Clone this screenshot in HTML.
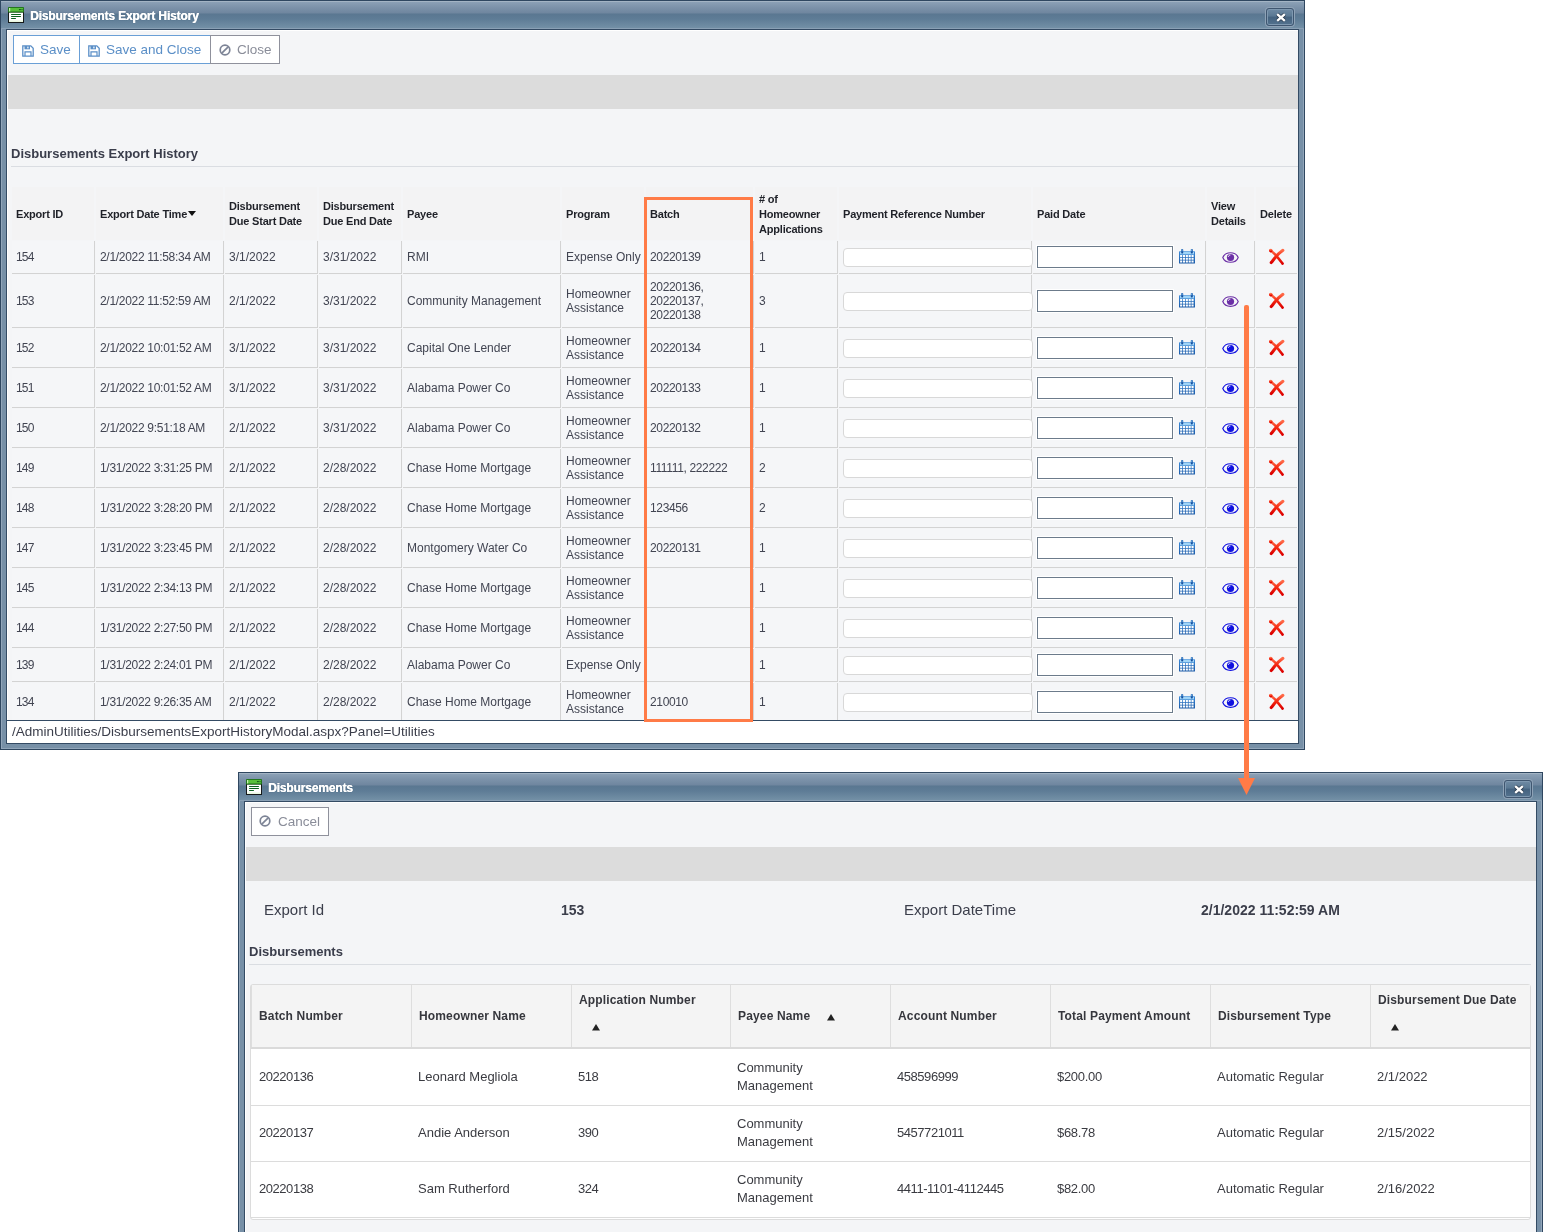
<!DOCTYPE html><html><head><meta charset="utf-8"><style>
*{margin:0;padding:0;box-sizing:border-box}
html,body{width:1543px;height:1232px;overflow:hidden;background:#fff;-webkit-font-smoothing:antialiased;font-family:"Liberation Sans",sans-serif;color:#3b3e4b}
.abs{position:absolute}
.frame{position:absolute;background:#7790a7;border:1px solid #2f4760}
.frame:before{content:"";position:absolute;left:0;top:0;right:0;bottom:0;border:1px solid #92a6ba;border-top-color:#a3b4c4}
.tbar{position:absolute;left:0;top:0;right:0;height:28px;background:linear-gradient(#8ea3b8 0px,#7d93aa 6px,#6f869f 12px,#5a7791 13px,#5e7c96 18px,#7390a6 27px)}
.tbar .hl{position:absolute;left:0;right:0;top:0;height:1px;background:#a3b4c4}
.tbar .hl2{position:absolute;left:0;right:0;bottom:0;height:1px;background:#8aa0b5}
.ttl{position:absolute;top:8px;font:bold 12px/14px "Liberation Sans",sans-serif;color:#fff;letter-spacing:-0.15px;text-shadow:0.4px 0 0 #fff,0 0 1px #3d5670}
.content{position:absolute;background:#f4f5f7;border:1px solid #344b64;overflow:hidden}
.content:before{content:"";position:absolute;left:0;top:0;right:0;bottom:0;border-left:1px solid #fff;border-top:1px solid #fff}
.xbtn{position:absolute;width:28px;height:18px;border:1px solid #3f5670;border-radius:3px;background:linear-gradient(#6f8aa4,#5a7893 45%,#44627f 50%,#53728e);box-shadow:0 0 0 1px #8ea2b6, inset 0 0 0 1px #7e98b0}
.band{position:absolute;background:#dcdcdc}
.btn{position:absolute;height:29px;border:1px solid #6a9fd6;background:#fff;font:13.5px/27px "Liberation Sans",sans-serif;color:#5b8fc7}
.btn.g{border-color:#8f919c;color:#8a8d99}
.sec{position:absolute;font:bold 13px/16px "Liberation Sans",sans-serif;color:#3a3d4b}
.rule{position:absolute;height:1px;background:#dadde2}
.c{position:absolute;border-right:1px solid #d3d3d3;border-bottom:1px solid #d3d3d3;background:#f5f6f8;display:flex;align-items:center;padding-left:4px;font-size:12px;line-height:14px;color:#424552;white-space:nowrap}
.h{position:absolute;background:#f3f3f4;display:flex;align-items:center;padding-left:4px;padding-top:1px;font-weight:bold;font-size:11px;line-height:15px;letter-spacing:-0.2px;color:#1f2128;white-space:nowrap}
.n{letter-spacing:-0.35px}
.inp{position:absolute;background:#fff;border:1px solid #d8d8d8;border-radius:4px}
.dinp{position:absolute;background:#fff;border:1px solid #6c7b8b;box-shadow:0 0 0 1px #fff}
.h2{position:absolute;background:#f4f4f4;border-right:1px solid #dedede;display:flex;align-items:center;padding-left:9px;font-weight:bold;font-size:12px;line-height:18px;color:#36373d;letter-spacing:0.15px;white-space:nowrap}
.c2{position:absolute;background:#fff;border-bottom:1px solid #dcdcdc;display:flex;align-items:center;padding-left:8px;font-size:13px;line-height:18px;color:#3a3b41;white-space:nowrap}
</style></head><body><div id="wrap" style="position:absolute;left:0;top:0;width:1543px;height:1232px;will-change:transform">
<div class="frame" style="left:0;top:0;width:1305px;height:750px">
<div class="tbar"><div class="hl"></div><div class="hl2"></div></div>
</div>
<svg class="abs" style="left:8px;top:7px" width="16" height="16" viewBox="0 0 16 16">
<rect x="0.5" y="5" width="15" height="10.5" fill="#fff" stroke="#16191a" stroke-width="1"/>
<rect x="1" y="13.5" width="14" height="1.5" fill="#eaf8e0"/>
<rect x="0" y="0" width="16" height="5.6" rx="0.8" fill="#23761f"/>
<rect x="1" y="1" width="14" height="3.4" fill="#58bf3c"/>
<rect x="1" y="1" width="1.2" height="3.4" fill="#c9f0b2"/>
<ellipse cx="11.9" cy="2.6" rx="1.1" ry="0.65" fill="#0f4f19"/><circle cx="14" cy="2.6" r="0.6" fill="#0f4f19"/>
<rect x="3" y="6.9" width="10" height="1.1" rx="0.5" fill="#0c6220"/>
<rect x="3" y="8.9" width="10" height="1.1" rx="0.5" fill="#0c6220"/>
<rect x="3" y="11" width="5" height="1.1" rx="0.5" fill="#0c6220"/>
</svg>
<div class="ttl" style="left:30px;top:9px">Disbursements Export History</div>
<div class="xbtn" style="left:1266px;top:8px"><svg class="abs" style="left:8px;top:3px" width="12" height="11" viewBox="0 0 12 11">
<path d="M2.2 2.2 L9.8 8.8 M9.8 2.2 L2.2 8.8" stroke="#2a3a4c" stroke-width="3.8" stroke-linecap="butt"/>
<path d="M2.2 2.2 L9.8 8.8 M9.8 2.2 L2.2 8.8" stroke="#fff" stroke-width="2.4" stroke-linecap="butt"/></svg></div>
<div class="content" style="left:6px;top:29px;width:1293px;height:715px">
</div>
<div class="btn" style="left:13px;top:35px;width:67px"></div>
<svg class="abs" style="left:22px;top:45px" width="12" height="12" viewBox="0 0 12 12">
<path d="M0.8 0.8 H8.8 L11.2 3.2 V11.2 H0.8 Z" fill="none" stroke="#5b8fc7" stroke-width="1.3"/>
<rect x="2.5" y="1" width="5.5" height="3.3" fill="#5b8fc7"/><rect x="5.3" y="1.6" width="1.2" height="1.8" fill="#fff"/>
<path d="M3 11 V6.8 H9 V11" fill="none" stroke="#5b8fc7" stroke-width="1.2"/></svg>
<div class="abs" style="left:40px;top:35px;font:13.5px/29px 'Liberation Sans',sans-serif;color:#5b8fc7">Save</div>
<div class="btn" style="left:79px;top:35px;width:132px"></div>
<svg class="abs" style="left:88px;top:45px" width="12" height="12" viewBox="0 0 12 12">
<path d="M0.8 0.8 H8.8 L11.2 3.2 V11.2 H0.8 Z" fill="none" stroke="#5b8fc7" stroke-width="1.3"/>
<rect x="2.5" y="1" width="5.5" height="3.3" fill="#5b8fc7"/><rect x="5.3" y="1.6" width="1.2" height="1.8" fill="#fff"/>
<path d="M3 11 V6.8 H9 V11" fill="none" stroke="#5b8fc7" stroke-width="1.2"/></svg>
<div class="abs" style="left:106px;top:35px;font:13.5px/29px 'Liberation Sans',sans-serif;color:#5b8fc7">Save and Close</div>
<div class="btn g" style="left:210px;top:35px;width:70px"></div>
<svg class="abs" style="left:219px;top:44px" width="12" height="12" viewBox="0 0 12 12">
<circle cx="6" cy="6" r="4.8" fill="none" stroke="#7d8496" stroke-width="1.7"/><path d="M2.8 9.2 L9.2 2.8" stroke="#7d8496" stroke-width="1.7"/></svg>
<div class="abs" style="left:237px;top:35px;font:13.5px/29px 'Liberation Sans',sans-serif;color:#8a8d99">Close</div>
<div class="band" style="left:8px;top:75px;width:1290px;height:34px"></div>
<div class="sec" style="left:11px;top:146px">Disbursements Export History</div>
<div class="rule" style="left:11px;top:166px;width:1287px"></div>
<div class="h" style="left:12px;top:187px;width:82px;height:53px;padding-left:4px"><span>Export ID</span></div>
<div class="h" style="left:96px;top:187px;width:127px;height:53px;padding-left:4px"><span>Export Date Time</span> <svg style="margin-left:1px;margin-top:-1px" width="8" height="5" viewBox="0 0 8 5"><path d="M0 0H8L4 5Z" fill="#111"/></svg></div>
<div class="h" style="left:225px;top:187px;width:92px;height:53px;padding-left:4px"><span>Disbursement<br>Due Start Date</span></div>
<div class="h" style="left:319px;top:187px;width:82px;height:53px;padding-left:4px"><span>Disbursement<br>Due End Date</span></div>
<div class="h" style="left:403px;top:187px;width:157px;height:53px;padding-left:4px"><span>Payee</span></div>
<div class="h" style="left:562px;top:187px;width:82px;height:53px;padding-left:4px"><span>Program</span></div>
<div class="h" style="left:646px;top:187px;width:107px;height:53px;padding-left:4px"><span>Batch</span></div>
<div class="h" style="left:755px;top:187px;width:82px;height:53px;padding-left:4px"><span># of<br>Homeowner<br>Applications</span></div>
<div class="h" style="left:839px;top:187px;width:192px;height:53px;padding-left:4px"><span>Payment Reference Number</span></div>
<div class="h" style="left:1033px;top:187px;width:172px;height:53px;padding-left:4px"><span>Paid Date</span></div>
<div class="h" style="left:1207px;top:187px;width:47px;height:53px;padding-left:4px"><span>View<br>Details</span></div>
<div class="h" style="left:1256px;top:187px;width:41px;height:53px;padding-left:4px"><span>Delete</span></div>
<div class="c" style="left:12px;top:241px;width:83px;height:33px;letter-spacing:-0.8px;padding-left:4px"><span>154</span></div>
<div class="c" style="left:96px;top:241px;width:128px;height:33px;letter-spacing:-0.3px;padding-left:4px"><span>2/1/2022 11:58:34 AM</span></div>
<div class="c" style="left:225px;top:241px;width:93px;height:33px;padding-left:4px"><span>3/1/2022</span></div>
<div class="c" style="left:319px;top:241px;width:83px;height:33px;padding-left:4px"><span>3/31/2022</span></div>
<div class="c" style="left:403px;top:241px;width:158px;height:33px;padding-left:4px"><span>RMI</span></div>
<div class="c" style="left:562px;top:241px;width:83px;height:33px;padding-left:4px"><span>Expense Only</span></div>
<div class="c" style="left:646px;top:241px;width:108px;height:33px;letter-spacing:-0.35px;padding-left:4px"><span>20220139</span></div>
<div class="c" style="left:755px;top:241px;width:83px;height:33px;padding-left:4px"><span>1</span></div>
<div class="c" style="left:839px;top:241px;width:193px;height:33px;padding-left:4px"><span></span></div>
<div class="c" style="left:1033px;top:241px;width:173px;height:33px;padding-left:4px"><span></span></div>
<div class="c" style="left:1207px;top:241px;width:48px;height:33px;padding-left:4px"><span></span></div>
<div class="c" style="left:1256px;top:241px;width:41px;height:33px;border-right:none;padding-left:4px"><span></span></div>
<div class="inp" style="left:843px;top:248px;width:190px;height:19px"></div>
<div class="dinp" style="left:1037px;top:246px;width:136px;height:22px"></div>
<svg class="abs" style="left:1179px;top:249px" width="16" height="15" viewBox="0 0 16 15"><defs><linearGradient id="cg" x1="0" y1="0" x2="0" y2="1"><stop offset="0" stop-color="#3d8ad8"/><stop offset="1" stop-color="#1c5ba8"/></linearGradient></defs><rect x="0" y="2.2" width="16" height="12.3" rx="0.6" fill="url(#cg)"/><rect x="1" y="2.8" width="14" height="2.6" fill="#9fd4f7"/><rect x="1.10" y="6.00" width="2.1" height="2.0" fill="#fff"/><rect x="1.10" y="8.75" width="2.1" height="2.0" fill="#fff"/><rect x="1.10" y="11.50" width="2.1" height="2.0" fill="#fff"/><rect x="3.95" y="6.00" width="2.1" height="2.0" fill="#fff"/><rect x="3.95" y="8.75" width="2.1" height="2.0" fill="#fff"/><rect x="3.95" y="11.50" width="2.1" height="2.0" fill="#fff"/><rect x="6.80" y="6.00" width="2.1" height="2.0" fill="#fff"/><rect x="6.80" y="8.75" width="2.1" height="2.0" fill="#fff"/><rect x="6.80" y="11.50" width="2.1" height="2.0" fill="#fff"/><rect x="9.65" y="6.00" width="2.1" height="2.0" fill="#fff"/><rect x="9.65" y="8.75" width="2.1" height="2.0" fill="#fff"/><rect x="9.65" y="11.50" width="2.1" height="2.0" fill="#fff"/><rect x="12.50" y="6.00" width="2.1" height="2.0" fill="#fff"/><rect x="12.50" y="8.75" width="2.1" height="2.0" fill="#fff"/><rect x="12.50" y="11.50" width="2.1" height="2.0" fill="#fff"/><rect x="2.2" y="0" width="2" height="4.6" rx="0.8" fill="#1650a0"/><rect x="2.6" y="0.3" width="1" height="2" fill="#6fb8ef"/><rect x="11.8" y="0" width="2" height="4.6" rx="0.8" fill="#1650a0"/><rect x="12.2" y="0.3" width="1" height="2" fill="#6fb8ef"/></svg>
<svg class="abs" style="left:1222px;top:252px" width="17" height="11" viewBox="0 0 17 11">
<path d="M0.8 5.5 C3.2 -0.9 13.8 -0.9 16.2 5.5 C13.8 11.9 3.2 11.9 0.8 5.5 Z" fill="none" stroke="#6b2fa6" stroke-width="1.15"/>
<circle cx="8.5" cy="5.5" r="3.6" fill="#6b2fa6"/><path d="M6.3 4.9 C6.5 3.7 7.3 3.0 8.4 3.0" fill="none" stroke="#fff" stroke-width="0.9"/></svg>
<svg class="abs" style="left:1268px;top:248px" width="17" height="17" viewBox="0 0 17 17">
<defs><linearGradient id="rg1268248" x1="0" y1="0" x2="0" y2="1"><stop offset="0" stop-color="#ff6a48"/><stop offset="0.5" stop-color="#f42a12"/><stop offset="1" stop-color="#dc0000"/></linearGradient></defs>
<g fill="none" stroke="url(#rg1268248)" stroke-linecap="round">
<path d="M2.6 2.4 C5 4.3 7.5 6.6 9.2 8.8 C11.3 11.2 12.8 13.3 14.6 15.6" stroke-width="2.6"/>
<path d="M14.9 2.3 C11.5 4.8 9.2 6.8 7.5 9.2 C5.6 11.5 4.4 13.2 3.2 14.6" stroke-width="3.0"/>
<circle cx="2.8" cy="2.6" r="1.1" stroke-width="1.4"/>
</g></svg>
<div class="c" style="left:12px;top:275px;width:83px;height:53px;letter-spacing:-0.8px;padding-left:4px"><span>153</span></div>
<div class="c" style="left:96px;top:275px;width:128px;height:53px;letter-spacing:-0.3px;padding-left:4px"><span>2/1/2022 11:52:59 AM</span></div>
<div class="c" style="left:225px;top:275px;width:93px;height:53px;padding-left:4px"><span>2/1/2022</span></div>
<div class="c" style="left:319px;top:275px;width:83px;height:53px;padding-left:4px"><span>3/31/2022</span></div>
<div class="c" style="left:403px;top:275px;width:158px;height:53px;padding-left:4px"><span>Community Management</span></div>
<div class="c" style="left:562px;top:275px;width:83px;height:53px;padding-left:4px"><span>Homeowner<br>Assistance</span></div>
<div class="c" style="left:646px;top:275px;width:108px;height:53px;letter-spacing:-0.35px;padding-left:4px"><span>20220136,<br>20220137,<br>20220138</span></div>
<div class="c" style="left:755px;top:275px;width:83px;height:53px;padding-left:4px"><span>3</span></div>
<div class="c" style="left:839px;top:275px;width:193px;height:53px;padding-left:4px"><span></span></div>
<div class="c" style="left:1033px;top:275px;width:173px;height:53px;padding-left:4px"><span></span></div>
<div class="c" style="left:1207px;top:275px;width:48px;height:53px;padding-left:4px"><span></span></div>
<div class="c" style="left:1256px;top:275px;width:41px;height:53px;border-right:none;padding-left:4px"><span></span></div>
<div class="inp" style="left:843px;top:292px;width:190px;height:19px"></div>
<div class="dinp" style="left:1037px;top:290px;width:136px;height:22px"></div>
<svg class="abs" style="left:1179px;top:293px" width="16" height="15" viewBox="0 0 16 15"><defs><linearGradient id="cg" x1="0" y1="0" x2="0" y2="1"><stop offset="0" stop-color="#3d8ad8"/><stop offset="1" stop-color="#1c5ba8"/></linearGradient></defs><rect x="0" y="2.2" width="16" height="12.3" rx="0.6" fill="url(#cg)"/><rect x="1" y="2.8" width="14" height="2.6" fill="#9fd4f7"/><rect x="1.10" y="6.00" width="2.1" height="2.0" fill="#fff"/><rect x="1.10" y="8.75" width="2.1" height="2.0" fill="#fff"/><rect x="1.10" y="11.50" width="2.1" height="2.0" fill="#fff"/><rect x="3.95" y="6.00" width="2.1" height="2.0" fill="#fff"/><rect x="3.95" y="8.75" width="2.1" height="2.0" fill="#fff"/><rect x="3.95" y="11.50" width="2.1" height="2.0" fill="#fff"/><rect x="6.80" y="6.00" width="2.1" height="2.0" fill="#fff"/><rect x="6.80" y="8.75" width="2.1" height="2.0" fill="#fff"/><rect x="6.80" y="11.50" width="2.1" height="2.0" fill="#fff"/><rect x="9.65" y="6.00" width="2.1" height="2.0" fill="#fff"/><rect x="9.65" y="8.75" width="2.1" height="2.0" fill="#fff"/><rect x="9.65" y="11.50" width="2.1" height="2.0" fill="#fff"/><rect x="12.50" y="6.00" width="2.1" height="2.0" fill="#fff"/><rect x="12.50" y="8.75" width="2.1" height="2.0" fill="#fff"/><rect x="12.50" y="11.50" width="2.1" height="2.0" fill="#fff"/><rect x="2.2" y="0" width="2" height="4.6" rx="0.8" fill="#1650a0"/><rect x="2.6" y="0.3" width="1" height="2" fill="#6fb8ef"/><rect x="11.8" y="0" width="2" height="4.6" rx="0.8" fill="#1650a0"/><rect x="12.2" y="0.3" width="1" height="2" fill="#6fb8ef"/></svg>
<svg class="abs" style="left:1222px;top:296px" width="17" height="11" viewBox="0 0 17 11">
<path d="M0.8 5.5 C3.2 -0.9 13.8 -0.9 16.2 5.5 C13.8 11.9 3.2 11.9 0.8 5.5 Z" fill="none" stroke="#6b2fa6" stroke-width="1.15"/>
<circle cx="8.5" cy="5.5" r="3.6" fill="#6b2fa6"/><path d="M6.3 4.9 C6.5 3.7 7.3 3.0 8.4 3.0" fill="none" stroke="#fff" stroke-width="0.9"/></svg>
<svg class="abs" style="left:1268px;top:292px" width="17" height="17" viewBox="0 0 17 17">
<defs><linearGradient id="rg1268292" x1="0" y1="0" x2="0" y2="1"><stop offset="0" stop-color="#ff6a48"/><stop offset="0.5" stop-color="#f42a12"/><stop offset="1" stop-color="#dc0000"/></linearGradient></defs>
<g fill="none" stroke="url(#rg1268292)" stroke-linecap="round">
<path d="M2.6 2.4 C5 4.3 7.5 6.6 9.2 8.8 C11.3 11.2 12.8 13.3 14.6 15.6" stroke-width="2.6"/>
<path d="M14.9 2.3 C11.5 4.8 9.2 6.8 7.5 9.2 C5.6 11.5 4.4 13.2 3.2 14.6" stroke-width="3.0"/>
<circle cx="2.8" cy="2.6" r="1.1" stroke-width="1.4"/>
</g></svg>
<div class="c" style="left:12px;top:329px;width:83px;height:39px;letter-spacing:-0.8px;padding-left:4px"><span>152</span></div>
<div class="c" style="left:96px;top:329px;width:128px;height:39px;letter-spacing:-0.3px;padding-left:4px"><span>2/1/2022 10:01:52 AM</span></div>
<div class="c" style="left:225px;top:329px;width:93px;height:39px;padding-left:4px"><span>3/1/2022</span></div>
<div class="c" style="left:319px;top:329px;width:83px;height:39px;padding-left:4px"><span>3/31/2022</span></div>
<div class="c" style="left:403px;top:329px;width:158px;height:39px;padding-left:4px"><span>Capital One Lender</span></div>
<div class="c" style="left:562px;top:329px;width:83px;height:39px;padding-left:4px"><span>Homeowner<br>Assistance</span></div>
<div class="c" style="left:646px;top:329px;width:108px;height:39px;letter-spacing:-0.35px;padding-left:4px"><span>20220134</span></div>
<div class="c" style="left:755px;top:329px;width:83px;height:39px;padding-left:4px"><span>1</span></div>
<div class="c" style="left:839px;top:329px;width:193px;height:39px;padding-left:4px"><span></span></div>
<div class="c" style="left:1033px;top:329px;width:173px;height:39px;padding-left:4px"><span></span></div>
<div class="c" style="left:1207px;top:329px;width:48px;height:39px;padding-left:4px"><span></span></div>
<div class="c" style="left:1256px;top:329px;width:41px;height:39px;border-right:none;padding-left:4px"><span></span></div>
<div class="inp" style="left:843px;top:339px;width:190px;height:19px"></div>
<div class="dinp" style="left:1037px;top:337px;width:136px;height:22px"></div>
<svg class="abs" style="left:1179px;top:340px" width="16" height="15" viewBox="0 0 16 15"><defs><linearGradient id="cg" x1="0" y1="0" x2="0" y2="1"><stop offset="0" stop-color="#3d8ad8"/><stop offset="1" stop-color="#1c5ba8"/></linearGradient></defs><rect x="0" y="2.2" width="16" height="12.3" rx="0.6" fill="url(#cg)"/><rect x="1" y="2.8" width="14" height="2.6" fill="#9fd4f7"/><rect x="1.10" y="6.00" width="2.1" height="2.0" fill="#fff"/><rect x="1.10" y="8.75" width="2.1" height="2.0" fill="#fff"/><rect x="1.10" y="11.50" width="2.1" height="2.0" fill="#fff"/><rect x="3.95" y="6.00" width="2.1" height="2.0" fill="#fff"/><rect x="3.95" y="8.75" width="2.1" height="2.0" fill="#fff"/><rect x="3.95" y="11.50" width="2.1" height="2.0" fill="#fff"/><rect x="6.80" y="6.00" width="2.1" height="2.0" fill="#fff"/><rect x="6.80" y="8.75" width="2.1" height="2.0" fill="#fff"/><rect x="6.80" y="11.50" width="2.1" height="2.0" fill="#fff"/><rect x="9.65" y="6.00" width="2.1" height="2.0" fill="#fff"/><rect x="9.65" y="8.75" width="2.1" height="2.0" fill="#fff"/><rect x="9.65" y="11.50" width="2.1" height="2.0" fill="#fff"/><rect x="12.50" y="6.00" width="2.1" height="2.0" fill="#fff"/><rect x="12.50" y="8.75" width="2.1" height="2.0" fill="#fff"/><rect x="12.50" y="11.50" width="2.1" height="2.0" fill="#fff"/><rect x="2.2" y="0" width="2" height="4.6" rx="0.8" fill="#1650a0"/><rect x="2.6" y="0.3" width="1" height="2" fill="#6fb8ef"/><rect x="11.8" y="0" width="2" height="4.6" rx="0.8" fill="#1650a0"/><rect x="12.2" y="0.3" width="1" height="2" fill="#6fb8ef"/></svg>
<svg class="abs" style="left:1222px;top:343px" width="17" height="11" viewBox="0 0 17 11">
<path d="M0.8 5.5 C3.2 -0.9 13.8 -0.9 16.2 5.5 C13.8 11.9 3.2 11.9 0.8 5.5 Z" fill="none" stroke="#1010e0" stroke-width="1.15"/>
<circle cx="8.5" cy="5.5" r="3.6" fill="#1010e0"/><path d="M6.3 4.9 C6.5 3.7 7.3 3.0 8.4 3.0" fill="none" stroke="#fff" stroke-width="0.9"/></svg>
<svg class="abs" style="left:1268px;top:339px" width="17" height="17" viewBox="0 0 17 17">
<defs><linearGradient id="rg1268339" x1="0" y1="0" x2="0" y2="1"><stop offset="0" stop-color="#ff6a48"/><stop offset="0.5" stop-color="#f42a12"/><stop offset="1" stop-color="#dc0000"/></linearGradient></defs>
<g fill="none" stroke="url(#rg1268339)" stroke-linecap="round">
<path d="M2.6 2.4 C5 4.3 7.5 6.6 9.2 8.8 C11.3 11.2 12.8 13.3 14.6 15.6" stroke-width="2.6"/>
<path d="M14.9 2.3 C11.5 4.8 9.2 6.8 7.5 9.2 C5.6 11.5 4.4 13.2 3.2 14.6" stroke-width="3.0"/>
<circle cx="2.8" cy="2.6" r="1.1" stroke-width="1.4"/>
</g></svg>
<div class="c" style="left:12px;top:369px;width:83px;height:39px;letter-spacing:-0.8px;padding-left:4px"><span>151</span></div>
<div class="c" style="left:96px;top:369px;width:128px;height:39px;letter-spacing:-0.3px;padding-left:4px"><span>2/1/2022 10:01:52 AM</span></div>
<div class="c" style="left:225px;top:369px;width:93px;height:39px;padding-left:4px"><span>3/1/2022</span></div>
<div class="c" style="left:319px;top:369px;width:83px;height:39px;padding-left:4px"><span>3/31/2022</span></div>
<div class="c" style="left:403px;top:369px;width:158px;height:39px;padding-left:4px"><span>Alabama Power Co</span></div>
<div class="c" style="left:562px;top:369px;width:83px;height:39px;padding-left:4px"><span>Homeowner<br>Assistance</span></div>
<div class="c" style="left:646px;top:369px;width:108px;height:39px;letter-spacing:-0.35px;padding-left:4px"><span>20220133</span></div>
<div class="c" style="left:755px;top:369px;width:83px;height:39px;padding-left:4px"><span>1</span></div>
<div class="c" style="left:839px;top:369px;width:193px;height:39px;padding-left:4px"><span></span></div>
<div class="c" style="left:1033px;top:369px;width:173px;height:39px;padding-left:4px"><span></span></div>
<div class="c" style="left:1207px;top:369px;width:48px;height:39px;padding-left:4px"><span></span></div>
<div class="c" style="left:1256px;top:369px;width:41px;height:39px;border-right:none;padding-left:4px"><span></span></div>
<div class="inp" style="left:843px;top:379px;width:190px;height:19px"></div>
<div class="dinp" style="left:1037px;top:377px;width:136px;height:22px"></div>
<svg class="abs" style="left:1179px;top:380px" width="16" height="15" viewBox="0 0 16 15"><defs><linearGradient id="cg" x1="0" y1="0" x2="0" y2="1"><stop offset="0" stop-color="#3d8ad8"/><stop offset="1" stop-color="#1c5ba8"/></linearGradient></defs><rect x="0" y="2.2" width="16" height="12.3" rx="0.6" fill="url(#cg)"/><rect x="1" y="2.8" width="14" height="2.6" fill="#9fd4f7"/><rect x="1.10" y="6.00" width="2.1" height="2.0" fill="#fff"/><rect x="1.10" y="8.75" width="2.1" height="2.0" fill="#fff"/><rect x="1.10" y="11.50" width="2.1" height="2.0" fill="#fff"/><rect x="3.95" y="6.00" width="2.1" height="2.0" fill="#fff"/><rect x="3.95" y="8.75" width="2.1" height="2.0" fill="#fff"/><rect x="3.95" y="11.50" width="2.1" height="2.0" fill="#fff"/><rect x="6.80" y="6.00" width="2.1" height="2.0" fill="#fff"/><rect x="6.80" y="8.75" width="2.1" height="2.0" fill="#fff"/><rect x="6.80" y="11.50" width="2.1" height="2.0" fill="#fff"/><rect x="9.65" y="6.00" width="2.1" height="2.0" fill="#fff"/><rect x="9.65" y="8.75" width="2.1" height="2.0" fill="#fff"/><rect x="9.65" y="11.50" width="2.1" height="2.0" fill="#fff"/><rect x="12.50" y="6.00" width="2.1" height="2.0" fill="#fff"/><rect x="12.50" y="8.75" width="2.1" height="2.0" fill="#fff"/><rect x="12.50" y="11.50" width="2.1" height="2.0" fill="#fff"/><rect x="2.2" y="0" width="2" height="4.6" rx="0.8" fill="#1650a0"/><rect x="2.6" y="0.3" width="1" height="2" fill="#6fb8ef"/><rect x="11.8" y="0" width="2" height="4.6" rx="0.8" fill="#1650a0"/><rect x="12.2" y="0.3" width="1" height="2" fill="#6fb8ef"/></svg>
<svg class="abs" style="left:1222px;top:383px" width="17" height="11" viewBox="0 0 17 11">
<path d="M0.8 5.5 C3.2 -0.9 13.8 -0.9 16.2 5.5 C13.8 11.9 3.2 11.9 0.8 5.5 Z" fill="none" stroke="#1010e0" stroke-width="1.15"/>
<circle cx="8.5" cy="5.5" r="3.6" fill="#1010e0"/><path d="M6.3 4.9 C6.5 3.7 7.3 3.0 8.4 3.0" fill="none" stroke="#fff" stroke-width="0.9"/></svg>
<svg class="abs" style="left:1268px;top:379px" width="17" height="17" viewBox="0 0 17 17">
<defs><linearGradient id="rg1268379" x1="0" y1="0" x2="0" y2="1"><stop offset="0" stop-color="#ff6a48"/><stop offset="0.5" stop-color="#f42a12"/><stop offset="1" stop-color="#dc0000"/></linearGradient></defs>
<g fill="none" stroke="url(#rg1268379)" stroke-linecap="round">
<path d="M2.6 2.4 C5 4.3 7.5 6.6 9.2 8.8 C11.3 11.2 12.8 13.3 14.6 15.6" stroke-width="2.6"/>
<path d="M14.9 2.3 C11.5 4.8 9.2 6.8 7.5 9.2 C5.6 11.5 4.4 13.2 3.2 14.6" stroke-width="3.0"/>
<circle cx="2.8" cy="2.6" r="1.1" stroke-width="1.4"/>
</g></svg>
<div class="c" style="left:12px;top:409px;width:83px;height:39px;letter-spacing:-0.8px;padding-left:4px"><span>150</span></div>
<div class="c" style="left:96px;top:409px;width:128px;height:39px;letter-spacing:-0.3px;padding-left:4px"><span>2/1/2022 9:51:18 AM</span></div>
<div class="c" style="left:225px;top:409px;width:93px;height:39px;padding-left:4px"><span>2/1/2022</span></div>
<div class="c" style="left:319px;top:409px;width:83px;height:39px;padding-left:4px"><span>3/31/2022</span></div>
<div class="c" style="left:403px;top:409px;width:158px;height:39px;padding-left:4px"><span>Alabama Power Co</span></div>
<div class="c" style="left:562px;top:409px;width:83px;height:39px;padding-left:4px"><span>Homeowner<br>Assistance</span></div>
<div class="c" style="left:646px;top:409px;width:108px;height:39px;letter-spacing:-0.35px;padding-left:4px"><span>20220132</span></div>
<div class="c" style="left:755px;top:409px;width:83px;height:39px;padding-left:4px"><span>1</span></div>
<div class="c" style="left:839px;top:409px;width:193px;height:39px;padding-left:4px"><span></span></div>
<div class="c" style="left:1033px;top:409px;width:173px;height:39px;padding-left:4px"><span></span></div>
<div class="c" style="left:1207px;top:409px;width:48px;height:39px;padding-left:4px"><span></span></div>
<div class="c" style="left:1256px;top:409px;width:41px;height:39px;border-right:none;padding-left:4px"><span></span></div>
<div class="inp" style="left:843px;top:419px;width:190px;height:19px"></div>
<div class="dinp" style="left:1037px;top:417px;width:136px;height:22px"></div>
<svg class="abs" style="left:1179px;top:420px" width="16" height="15" viewBox="0 0 16 15"><defs><linearGradient id="cg" x1="0" y1="0" x2="0" y2="1"><stop offset="0" stop-color="#3d8ad8"/><stop offset="1" stop-color="#1c5ba8"/></linearGradient></defs><rect x="0" y="2.2" width="16" height="12.3" rx="0.6" fill="url(#cg)"/><rect x="1" y="2.8" width="14" height="2.6" fill="#9fd4f7"/><rect x="1.10" y="6.00" width="2.1" height="2.0" fill="#fff"/><rect x="1.10" y="8.75" width="2.1" height="2.0" fill="#fff"/><rect x="1.10" y="11.50" width="2.1" height="2.0" fill="#fff"/><rect x="3.95" y="6.00" width="2.1" height="2.0" fill="#fff"/><rect x="3.95" y="8.75" width="2.1" height="2.0" fill="#fff"/><rect x="3.95" y="11.50" width="2.1" height="2.0" fill="#fff"/><rect x="6.80" y="6.00" width="2.1" height="2.0" fill="#fff"/><rect x="6.80" y="8.75" width="2.1" height="2.0" fill="#fff"/><rect x="6.80" y="11.50" width="2.1" height="2.0" fill="#fff"/><rect x="9.65" y="6.00" width="2.1" height="2.0" fill="#fff"/><rect x="9.65" y="8.75" width="2.1" height="2.0" fill="#fff"/><rect x="9.65" y="11.50" width="2.1" height="2.0" fill="#fff"/><rect x="12.50" y="6.00" width="2.1" height="2.0" fill="#fff"/><rect x="12.50" y="8.75" width="2.1" height="2.0" fill="#fff"/><rect x="12.50" y="11.50" width="2.1" height="2.0" fill="#fff"/><rect x="2.2" y="0" width="2" height="4.6" rx="0.8" fill="#1650a0"/><rect x="2.6" y="0.3" width="1" height="2" fill="#6fb8ef"/><rect x="11.8" y="0" width="2" height="4.6" rx="0.8" fill="#1650a0"/><rect x="12.2" y="0.3" width="1" height="2" fill="#6fb8ef"/></svg>
<svg class="abs" style="left:1222px;top:423px" width="17" height="11" viewBox="0 0 17 11">
<path d="M0.8 5.5 C3.2 -0.9 13.8 -0.9 16.2 5.5 C13.8 11.9 3.2 11.9 0.8 5.5 Z" fill="none" stroke="#1010e0" stroke-width="1.15"/>
<circle cx="8.5" cy="5.5" r="3.6" fill="#1010e0"/><path d="M6.3 4.9 C6.5 3.7 7.3 3.0 8.4 3.0" fill="none" stroke="#fff" stroke-width="0.9"/></svg>
<svg class="abs" style="left:1268px;top:419px" width="17" height="17" viewBox="0 0 17 17">
<defs><linearGradient id="rg1268419" x1="0" y1="0" x2="0" y2="1"><stop offset="0" stop-color="#ff6a48"/><stop offset="0.5" stop-color="#f42a12"/><stop offset="1" stop-color="#dc0000"/></linearGradient></defs>
<g fill="none" stroke="url(#rg1268419)" stroke-linecap="round">
<path d="M2.6 2.4 C5 4.3 7.5 6.6 9.2 8.8 C11.3 11.2 12.8 13.3 14.6 15.6" stroke-width="2.6"/>
<path d="M14.9 2.3 C11.5 4.8 9.2 6.8 7.5 9.2 C5.6 11.5 4.4 13.2 3.2 14.6" stroke-width="3.0"/>
<circle cx="2.8" cy="2.6" r="1.1" stroke-width="1.4"/>
</g></svg>
<div class="c" style="left:12px;top:449px;width:83px;height:39px;letter-spacing:-0.8px;padding-left:4px"><span>149</span></div>
<div class="c" style="left:96px;top:449px;width:128px;height:39px;letter-spacing:-0.3px;padding-left:4px"><span>1/31/2022 3:31:25 PM</span></div>
<div class="c" style="left:225px;top:449px;width:93px;height:39px;padding-left:4px"><span>2/1/2022</span></div>
<div class="c" style="left:319px;top:449px;width:83px;height:39px;padding-left:4px"><span>2/28/2022</span></div>
<div class="c" style="left:403px;top:449px;width:158px;height:39px;padding-left:4px"><span>Chase Home Mortgage</span></div>
<div class="c" style="left:562px;top:449px;width:83px;height:39px;padding-left:4px"><span>Homeowner<br>Assistance</span></div>
<div class="c" style="left:646px;top:449px;width:108px;height:39px;letter-spacing:-0.35px;padding-left:4px"><span>111111, 222222</span></div>
<div class="c" style="left:755px;top:449px;width:83px;height:39px;padding-left:4px"><span>2</span></div>
<div class="c" style="left:839px;top:449px;width:193px;height:39px;padding-left:4px"><span></span></div>
<div class="c" style="left:1033px;top:449px;width:173px;height:39px;padding-left:4px"><span></span></div>
<div class="c" style="left:1207px;top:449px;width:48px;height:39px;padding-left:4px"><span></span></div>
<div class="c" style="left:1256px;top:449px;width:41px;height:39px;border-right:none;padding-left:4px"><span></span></div>
<div class="inp" style="left:843px;top:459px;width:190px;height:19px"></div>
<div class="dinp" style="left:1037px;top:457px;width:136px;height:22px"></div>
<svg class="abs" style="left:1179px;top:460px" width="16" height="15" viewBox="0 0 16 15"><defs><linearGradient id="cg" x1="0" y1="0" x2="0" y2="1"><stop offset="0" stop-color="#3d8ad8"/><stop offset="1" stop-color="#1c5ba8"/></linearGradient></defs><rect x="0" y="2.2" width="16" height="12.3" rx="0.6" fill="url(#cg)"/><rect x="1" y="2.8" width="14" height="2.6" fill="#9fd4f7"/><rect x="1.10" y="6.00" width="2.1" height="2.0" fill="#fff"/><rect x="1.10" y="8.75" width="2.1" height="2.0" fill="#fff"/><rect x="1.10" y="11.50" width="2.1" height="2.0" fill="#fff"/><rect x="3.95" y="6.00" width="2.1" height="2.0" fill="#fff"/><rect x="3.95" y="8.75" width="2.1" height="2.0" fill="#fff"/><rect x="3.95" y="11.50" width="2.1" height="2.0" fill="#fff"/><rect x="6.80" y="6.00" width="2.1" height="2.0" fill="#fff"/><rect x="6.80" y="8.75" width="2.1" height="2.0" fill="#fff"/><rect x="6.80" y="11.50" width="2.1" height="2.0" fill="#fff"/><rect x="9.65" y="6.00" width="2.1" height="2.0" fill="#fff"/><rect x="9.65" y="8.75" width="2.1" height="2.0" fill="#fff"/><rect x="9.65" y="11.50" width="2.1" height="2.0" fill="#fff"/><rect x="12.50" y="6.00" width="2.1" height="2.0" fill="#fff"/><rect x="12.50" y="8.75" width="2.1" height="2.0" fill="#fff"/><rect x="12.50" y="11.50" width="2.1" height="2.0" fill="#fff"/><rect x="2.2" y="0" width="2" height="4.6" rx="0.8" fill="#1650a0"/><rect x="2.6" y="0.3" width="1" height="2" fill="#6fb8ef"/><rect x="11.8" y="0" width="2" height="4.6" rx="0.8" fill="#1650a0"/><rect x="12.2" y="0.3" width="1" height="2" fill="#6fb8ef"/></svg>
<svg class="abs" style="left:1222px;top:463px" width="17" height="11" viewBox="0 0 17 11">
<path d="M0.8 5.5 C3.2 -0.9 13.8 -0.9 16.2 5.5 C13.8 11.9 3.2 11.9 0.8 5.5 Z" fill="none" stroke="#1010e0" stroke-width="1.15"/>
<circle cx="8.5" cy="5.5" r="3.6" fill="#1010e0"/><path d="M6.3 4.9 C6.5 3.7 7.3 3.0 8.4 3.0" fill="none" stroke="#fff" stroke-width="0.9"/></svg>
<svg class="abs" style="left:1268px;top:459px" width="17" height="17" viewBox="0 0 17 17">
<defs><linearGradient id="rg1268459" x1="0" y1="0" x2="0" y2="1"><stop offset="0" stop-color="#ff6a48"/><stop offset="0.5" stop-color="#f42a12"/><stop offset="1" stop-color="#dc0000"/></linearGradient></defs>
<g fill="none" stroke="url(#rg1268459)" stroke-linecap="round">
<path d="M2.6 2.4 C5 4.3 7.5 6.6 9.2 8.8 C11.3 11.2 12.8 13.3 14.6 15.6" stroke-width="2.6"/>
<path d="M14.9 2.3 C11.5 4.8 9.2 6.8 7.5 9.2 C5.6 11.5 4.4 13.2 3.2 14.6" stroke-width="3.0"/>
<circle cx="2.8" cy="2.6" r="1.1" stroke-width="1.4"/>
</g></svg>
<div class="c" style="left:12px;top:489px;width:83px;height:39px;letter-spacing:-0.8px;padding-left:4px"><span>148</span></div>
<div class="c" style="left:96px;top:489px;width:128px;height:39px;letter-spacing:-0.3px;padding-left:4px"><span>1/31/2022 3:28:20 PM</span></div>
<div class="c" style="left:225px;top:489px;width:93px;height:39px;padding-left:4px"><span>2/1/2022</span></div>
<div class="c" style="left:319px;top:489px;width:83px;height:39px;padding-left:4px"><span>2/28/2022</span></div>
<div class="c" style="left:403px;top:489px;width:158px;height:39px;padding-left:4px"><span>Chase Home Mortgage</span></div>
<div class="c" style="left:562px;top:489px;width:83px;height:39px;padding-left:4px"><span>Homeowner<br>Assistance</span></div>
<div class="c" style="left:646px;top:489px;width:108px;height:39px;letter-spacing:-0.35px;padding-left:4px"><span>123456</span></div>
<div class="c" style="left:755px;top:489px;width:83px;height:39px;padding-left:4px"><span>2</span></div>
<div class="c" style="left:839px;top:489px;width:193px;height:39px;padding-left:4px"><span></span></div>
<div class="c" style="left:1033px;top:489px;width:173px;height:39px;padding-left:4px"><span></span></div>
<div class="c" style="left:1207px;top:489px;width:48px;height:39px;padding-left:4px"><span></span></div>
<div class="c" style="left:1256px;top:489px;width:41px;height:39px;border-right:none;padding-left:4px"><span></span></div>
<div class="inp" style="left:843px;top:499px;width:190px;height:19px"></div>
<div class="dinp" style="left:1037px;top:497px;width:136px;height:22px"></div>
<svg class="abs" style="left:1179px;top:500px" width="16" height="15" viewBox="0 0 16 15"><defs><linearGradient id="cg" x1="0" y1="0" x2="0" y2="1"><stop offset="0" stop-color="#3d8ad8"/><stop offset="1" stop-color="#1c5ba8"/></linearGradient></defs><rect x="0" y="2.2" width="16" height="12.3" rx="0.6" fill="url(#cg)"/><rect x="1" y="2.8" width="14" height="2.6" fill="#9fd4f7"/><rect x="1.10" y="6.00" width="2.1" height="2.0" fill="#fff"/><rect x="1.10" y="8.75" width="2.1" height="2.0" fill="#fff"/><rect x="1.10" y="11.50" width="2.1" height="2.0" fill="#fff"/><rect x="3.95" y="6.00" width="2.1" height="2.0" fill="#fff"/><rect x="3.95" y="8.75" width="2.1" height="2.0" fill="#fff"/><rect x="3.95" y="11.50" width="2.1" height="2.0" fill="#fff"/><rect x="6.80" y="6.00" width="2.1" height="2.0" fill="#fff"/><rect x="6.80" y="8.75" width="2.1" height="2.0" fill="#fff"/><rect x="6.80" y="11.50" width="2.1" height="2.0" fill="#fff"/><rect x="9.65" y="6.00" width="2.1" height="2.0" fill="#fff"/><rect x="9.65" y="8.75" width="2.1" height="2.0" fill="#fff"/><rect x="9.65" y="11.50" width="2.1" height="2.0" fill="#fff"/><rect x="12.50" y="6.00" width="2.1" height="2.0" fill="#fff"/><rect x="12.50" y="8.75" width="2.1" height="2.0" fill="#fff"/><rect x="12.50" y="11.50" width="2.1" height="2.0" fill="#fff"/><rect x="2.2" y="0" width="2" height="4.6" rx="0.8" fill="#1650a0"/><rect x="2.6" y="0.3" width="1" height="2" fill="#6fb8ef"/><rect x="11.8" y="0" width="2" height="4.6" rx="0.8" fill="#1650a0"/><rect x="12.2" y="0.3" width="1" height="2" fill="#6fb8ef"/></svg>
<svg class="abs" style="left:1222px;top:503px" width="17" height="11" viewBox="0 0 17 11">
<path d="M0.8 5.5 C3.2 -0.9 13.8 -0.9 16.2 5.5 C13.8 11.9 3.2 11.9 0.8 5.5 Z" fill="none" stroke="#1010e0" stroke-width="1.15"/>
<circle cx="8.5" cy="5.5" r="3.6" fill="#1010e0"/><path d="M6.3 4.9 C6.5 3.7 7.3 3.0 8.4 3.0" fill="none" stroke="#fff" stroke-width="0.9"/></svg>
<svg class="abs" style="left:1268px;top:499px" width="17" height="17" viewBox="0 0 17 17">
<defs><linearGradient id="rg1268499" x1="0" y1="0" x2="0" y2="1"><stop offset="0" stop-color="#ff6a48"/><stop offset="0.5" stop-color="#f42a12"/><stop offset="1" stop-color="#dc0000"/></linearGradient></defs>
<g fill="none" stroke="url(#rg1268499)" stroke-linecap="round">
<path d="M2.6 2.4 C5 4.3 7.5 6.6 9.2 8.8 C11.3 11.2 12.8 13.3 14.6 15.6" stroke-width="2.6"/>
<path d="M14.9 2.3 C11.5 4.8 9.2 6.8 7.5 9.2 C5.6 11.5 4.4 13.2 3.2 14.6" stroke-width="3.0"/>
<circle cx="2.8" cy="2.6" r="1.1" stroke-width="1.4"/>
</g></svg>
<div class="c" style="left:12px;top:529px;width:83px;height:39px;letter-spacing:-0.8px;padding-left:4px"><span>147</span></div>
<div class="c" style="left:96px;top:529px;width:128px;height:39px;letter-spacing:-0.3px;padding-left:4px"><span>1/31/2022 3:23:45 PM</span></div>
<div class="c" style="left:225px;top:529px;width:93px;height:39px;padding-left:4px"><span>2/1/2022</span></div>
<div class="c" style="left:319px;top:529px;width:83px;height:39px;padding-left:4px"><span>2/28/2022</span></div>
<div class="c" style="left:403px;top:529px;width:158px;height:39px;padding-left:4px"><span>Montgomery Water Co</span></div>
<div class="c" style="left:562px;top:529px;width:83px;height:39px;padding-left:4px"><span>Homeowner<br>Assistance</span></div>
<div class="c" style="left:646px;top:529px;width:108px;height:39px;letter-spacing:-0.35px;padding-left:4px"><span>20220131</span></div>
<div class="c" style="left:755px;top:529px;width:83px;height:39px;padding-left:4px"><span>1</span></div>
<div class="c" style="left:839px;top:529px;width:193px;height:39px;padding-left:4px"><span></span></div>
<div class="c" style="left:1033px;top:529px;width:173px;height:39px;padding-left:4px"><span></span></div>
<div class="c" style="left:1207px;top:529px;width:48px;height:39px;padding-left:4px"><span></span></div>
<div class="c" style="left:1256px;top:529px;width:41px;height:39px;border-right:none;padding-left:4px"><span></span></div>
<div class="inp" style="left:843px;top:539px;width:190px;height:19px"></div>
<div class="dinp" style="left:1037px;top:537px;width:136px;height:22px"></div>
<svg class="abs" style="left:1179px;top:540px" width="16" height="15" viewBox="0 0 16 15"><defs><linearGradient id="cg" x1="0" y1="0" x2="0" y2="1"><stop offset="0" stop-color="#3d8ad8"/><stop offset="1" stop-color="#1c5ba8"/></linearGradient></defs><rect x="0" y="2.2" width="16" height="12.3" rx="0.6" fill="url(#cg)"/><rect x="1" y="2.8" width="14" height="2.6" fill="#9fd4f7"/><rect x="1.10" y="6.00" width="2.1" height="2.0" fill="#fff"/><rect x="1.10" y="8.75" width="2.1" height="2.0" fill="#fff"/><rect x="1.10" y="11.50" width="2.1" height="2.0" fill="#fff"/><rect x="3.95" y="6.00" width="2.1" height="2.0" fill="#fff"/><rect x="3.95" y="8.75" width="2.1" height="2.0" fill="#fff"/><rect x="3.95" y="11.50" width="2.1" height="2.0" fill="#fff"/><rect x="6.80" y="6.00" width="2.1" height="2.0" fill="#fff"/><rect x="6.80" y="8.75" width="2.1" height="2.0" fill="#fff"/><rect x="6.80" y="11.50" width="2.1" height="2.0" fill="#fff"/><rect x="9.65" y="6.00" width="2.1" height="2.0" fill="#fff"/><rect x="9.65" y="8.75" width="2.1" height="2.0" fill="#fff"/><rect x="9.65" y="11.50" width="2.1" height="2.0" fill="#fff"/><rect x="12.50" y="6.00" width="2.1" height="2.0" fill="#fff"/><rect x="12.50" y="8.75" width="2.1" height="2.0" fill="#fff"/><rect x="12.50" y="11.50" width="2.1" height="2.0" fill="#fff"/><rect x="2.2" y="0" width="2" height="4.6" rx="0.8" fill="#1650a0"/><rect x="2.6" y="0.3" width="1" height="2" fill="#6fb8ef"/><rect x="11.8" y="0" width="2" height="4.6" rx="0.8" fill="#1650a0"/><rect x="12.2" y="0.3" width="1" height="2" fill="#6fb8ef"/></svg>
<svg class="abs" style="left:1222px;top:543px" width="17" height="11" viewBox="0 0 17 11">
<path d="M0.8 5.5 C3.2 -0.9 13.8 -0.9 16.2 5.5 C13.8 11.9 3.2 11.9 0.8 5.5 Z" fill="none" stroke="#1010e0" stroke-width="1.15"/>
<circle cx="8.5" cy="5.5" r="3.6" fill="#1010e0"/><path d="M6.3 4.9 C6.5 3.7 7.3 3.0 8.4 3.0" fill="none" stroke="#fff" stroke-width="0.9"/></svg>
<svg class="abs" style="left:1268px;top:539px" width="17" height="17" viewBox="0 0 17 17">
<defs><linearGradient id="rg1268539" x1="0" y1="0" x2="0" y2="1"><stop offset="0" stop-color="#ff6a48"/><stop offset="0.5" stop-color="#f42a12"/><stop offset="1" stop-color="#dc0000"/></linearGradient></defs>
<g fill="none" stroke="url(#rg1268539)" stroke-linecap="round">
<path d="M2.6 2.4 C5 4.3 7.5 6.6 9.2 8.8 C11.3 11.2 12.8 13.3 14.6 15.6" stroke-width="2.6"/>
<path d="M14.9 2.3 C11.5 4.8 9.2 6.8 7.5 9.2 C5.6 11.5 4.4 13.2 3.2 14.6" stroke-width="3.0"/>
<circle cx="2.8" cy="2.6" r="1.1" stroke-width="1.4"/>
</g></svg>
<div class="c" style="left:12px;top:569px;width:83px;height:39px;letter-spacing:-0.8px;padding-left:4px"><span>145</span></div>
<div class="c" style="left:96px;top:569px;width:128px;height:39px;letter-spacing:-0.3px;padding-left:4px"><span>1/31/2022 2:34:13 PM</span></div>
<div class="c" style="left:225px;top:569px;width:93px;height:39px;padding-left:4px"><span>2/1/2022</span></div>
<div class="c" style="left:319px;top:569px;width:83px;height:39px;padding-left:4px"><span>2/28/2022</span></div>
<div class="c" style="left:403px;top:569px;width:158px;height:39px;padding-left:4px"><span>Chase Home Mortgage</span></div>
<div class="c" style="left:562px;top:569px;width:83px;height:39px;padding-left:4px"><span>Homeowner<br>Assistance</span></div>
<div class="c" style="left:646px;top:569px;width:108px;height:39px;letter-spacing:-0.35px;padding-left:4px"><span></span></div>
<div class="c" style="left:755px;top:569px;width:83px;height:39px;padding-left:4px"><span>1</span></div>
<div class="c" style="left:839px;top:569px;width:193px;height:39px;padding-left:4px"><span></span></div>
<div class="c" style="left:1033px;top:569px;width:173px;height:39px;padding-left:4px"><span></span></div>
<div class="c" style="left:1207px;top:569px;width:48px;height:39px;padding-left:4px"><span></span></div>
<div class="c" style="left:1256px;top:569px;width:41px;height:39px;border-right:none;padding-left:4px"><span></span></div>
<div class="inp" style="left:843px;top:579px;width:190px;height:19px"></div>
<div class="dinp" style="left:1037px;top:577px;width:136px;height:22px"></div>
<svg class="abs" style="left:1179px;top:580px" width="16" height="15" viewBox="0 0 16 15"><defs><linearGradient id="cg" x1="0" y1="0" x2="0" y2="1"><stop offset="0" stop-color="#3d8ad8"/><stop offset="1" stop-color="#1c5ba8"/></linearGradient></defs><rect x="0" y="2.2" width="16" height="12.3" rx="0.6" fill="url(#cg)"/><rect x="1" y="2.8" width="14" height="2.6" fill="#9fd4f7"/><rect x="1.10" y="6.00" width="2.1" height="2.0" fill="#fff"/><rect x="1.10" y="8.75" width="2.1" height="2.0" fill="#fff"/><rect x="1.10" y="11.50" width="2.1" height="2.0" fill="#fff"/><rect x="3.95" y="6.00" width="2.1" height="2.0" fill="#fff"/><rect x="3.95" y="8.75" width="2.1" height="2.0" fill="#fff"/><rect x="3.95" y="11.50" width="2.1" height="2.0" fill="#fff"/><rect x="6.80" y="6.00" width="2.1" height="2.0" fill="#fff"/><rect x="6.80" y="8.75" width="2.1" height="2.0" fill="#fff"/><rect x="6.80" y="11.50" width="2.1" height="2.0" fill="#fff"/><rect x="9.65" y="6.00" width="2.1" height="2.0" fill="#fff"/><rect x="9.65" y="8.75" width="2.1" height="2.0" fill="#fff"/><rect x="9.65" y="11.50" width="2.1" height="2.0" fill="#fff"/><rect x="12.50" y="6.00" width="2.1" height="2.0" fill="#fff"/><rect x="12.50" y="8.75" width="2.1" height="2.0" fill="#fff"/><rect x="12.50" y="11.50" width="2.1" height="2.0" fill="#fff"/><rect x="2.2" y="0" width="2" height="4.6" rx="0.8" fill="#1650a0"/><rect x="2.6" y="0.3" width="1" height="2" fill="#6fb8ef"/><rect x="11.8" y="0" width="2" height="4.6" rx="0.8" fill="#1650a0"/><rect x="12.2" y="0.3" width="1" height="2" fill="#6fb8ef"/></svg>
<svg class="abs" style="left:1222px;top:583px" width="17" height="11" viewBox="0 0 17 11">
<path d="M0.8 5.5 C3.2 -0.9 13.8 -0.9 16.2 5.5 C13.8 11.9 3.2 11.9 0.8 5.5 Z" fill="none" stroke="#1010e0" stroke-width="1.15"/>
<circle cx="8.5" cy="5.5" r="3.6" fill="#1010e0"/><path d="M6.3 4.9 C6.5 3.7 7.3 3.0 8.4 3.0" fill="none" stroke="#fff" stroke-width="0.9"/></svg>
<svg class="abs" style="left:1268px;top:579px" width="17" height="17" viewBox="0 0 17 17">
<defs><linearGradient id="rg1268579" x1="0" y1="0" x2="0" y2="1"><stop offset="0" stop-color="#ff6a48"/><stop offset="0.5" stop-color="#f42a12"/><stop offset="1" stop-color="#dc0000"/></linearGradient></defs>
<g fill="none" stroke="url(#rg1268579)" stroke-linecap="round">
<path d="M2.6 2.4 C5 4.3 7.5 6.6 9.2 8.8 C11.3 11.2 12.8 13.3 14.6 15.6" stroke-width="2.6"/>
<path d="M14.9 2.3 C11.5 4.8 9.2 6.8 7.5 9.2 C5.6 11.5 4.4 13.2 3.2 14.6" stroke-width="3.0"/>
<circle cx="2.8" cy="2.6" r="1.1" stroke-width="1.4"/>
</g></svg>
<div class="c" style="left:12px;top:609px;width:83px;height:39px;letter-spacing:-0.8px;padding-left:4px"><span>144</span></div>
<div class="c" style="left:96px;top:609px;width:128px;height:39px;letter-spacing:-0.3px;padding-left:4px"><span>1/31/2022 2:27:50 PM</span></div>
<div class="c" style="left:225px;top:609px;width:93px;height:39px;padding-left:4px"><span>2/1/2022</span></div>
<div class="c" style="left:319px;top:609px;width:83px;height:39px;padding-left:4px"><span>2/28/2022</span></div>
<div class="c" style="left:403px;top:609px;width:158px;height:39px;padding-left:4px"><span>Chase Home Mortgage</span></div>
<div class="c" style="left:562px;top:609px;width:83px;height:39px;padding-left:4px"><span>Homeowner<br>Assistance</span></div>
<div class="c" style="left:646px;top:609px;width:108px;height:39px;letter-spacing:-0.35px;padding-left:4px"><span></span></div>
<div class="c" style="left:755px;top:609px;width:83px;height:39px;padding-left:4px"><span>1</span></div>
<div class="c" style="left:839px;top:609px;width:193px;height:39px;padding-left:4px"><span></span></div>
<div class="c" style="left:1033px;top:609px;width:173px;height:39px;padding-left:4px"><span></span></div>
<div class="c" style="left:1207px;top:609px;width:48px;height:39px;padding-left:4px"><span></span></div>
<div class="c" style="left:1256px;top:609px;width:41px;height:39px;border-right:none;padding-left:4px"><span></span></div>
<div class="inp" style="left:843px;top:619px;width:190px;height:19px"></div>
<div class="dinp" style="left:1037px;top:617px;width:136px;height:22px"></div>
<svg class="abs" style="left:1179px;top:620px" width="16" height="15" viewBox="0 0 16 15"><defs><linearGradient id="cg" x1="0" y1="0" x2="0" y2="1"><stop offset="0" stop-color="#3d8ad8"/><stop offset="1" stop-color="#1c5ba8"/></linearGradient></defs><rect x="0" y="2.2" width="16" height="12.3" rx="0.6" fill="url(#cg)"/><rect x="1" y="2.8" width="14" height="2.6" fill="#9fd4f7"/><rect x="1.10" y="6.00" width="2.1" height="2.0" fill="#fff"/><rect x="1.10" y="8.75" width="2.1" height="2.0" fill="#fff"/><rect x="1.10" y="11.50" width="2.1" height="2.0" fill="#fff"/><rect x="3.95" y="6.00" width="2.1" height="2.0" fill="#fff"/><rect x="3.95" y="8.75" width="2.1" height="2.0" fill="#fff"/><rect x="3.95" y="11.50" width="2.1" height="2.0" fill="#fff"/><rect x="6.80" y="6.00" width="2.1" height="2.0" fill="#fff"/><rect x="6.80" y="8.75" width="2.1" height="2.0" fill="#fff"/><rect x="6.80" y="11.50" width="2.1" height="2.0" fill="#fff"/><rect x="9.65" y="6.00" width="2.1" height="2.0" fill="#fff"/><rect x="9.65" y="8.75" width="2.1" height="2.0" fill="#fff"/><rect x="9.65" y="11.50" width="2.1" height="2.0" fill="#fff"/><rect x="12.50" y="6.00" width="2.1" height="2.0" fill="#fff"/><rect x="12.50" y="8.75" width="2.1" height="2.0" fill="#fff"/><rect x="12.50" y="11.50" width="2.1" height="2.0" fill="#fff"/><rect x="2.2" y="0" width="2" height="4.6" rx="0.8" fill="#1650a0"/><rect x="2.6" y="0.3" width="1" height="2" fill="#6fb8ef"/><rect x="11.8" y="0" width="2" height="4.6" rx="0.8" fill="#1650a0"/><rect x="12.2" y="0.3" width="1" height="2" fill="#6fb8ef"/></svg>
<svg class="abs" style="left:1222px;top:623px" width="17" height="11" viewBox="0 0 17 11">
<path d="M0.8 5.5 C3.2 -0.9 13.8 -0.9 16.2 5.5 C13.8 11.9 3.2 11.9 0.8 5.5 Z" fill="none" stroke="#1010e0" stroke-width="1.15"/>
<circle cx="8.5" cy="5.5" r="3.6" fill="#1010e0"/><path d="M6.3 4.9 C6.5 3.7 7.3 3.0 8.4 3.0" fill="none" stroke="#fff" stroke-width="0.9"/></svg>
<svg class="abs" style="left:1268px;top:619px" width="17" height="17" viewBox="0 0 17 17">
<defs><linearGradient id="rg1268619" x1="0" y1="0" x2="0" y2="1"><stop offset="0" stop-color="#ff6a48"/><stop offset="0.5" stop-color="#f42a12"/><stop offset="1" stop-color="#dc0000"/></linearGradient></defs>
<g fill="none" stroke="url(#rg1268619)" stroke-linecap="round">
<path d="M2.6 2.4 C5 4.3 7.5 6.6 9.2 8.8 C11.3 11.2 12.8 13.3 14.6 15.6" stroke-width="2.6"/>
<path d="M14.9 2.3 C11.5 4.8 9.2 6.8 7.5 9.2 C5.6 11.5 4.4 13.2 3.2 14.6" stroke-width="3.0"/>
<circle cx="2.8" cy="2.6" r="1.1" stroke-width="1.4"/>
</g></svg>
<div class="c" style="left:12px;top:649px;width:83px;height:33px;letter-spacing:-0.8px;padding-left:4px"><span>139</span></div>
<div class="c" style="left:96px;top:649px;width:128px;height:33px;letter-spacing:-0.3px;padding-left:4px"><span>1/31/2022 2:24:01 PM</span></div>
<div class="c" style="left:225px;top:649px;width:93px;height:33px;padding-left:4px"><span>2/1/2022</span></div>
<div class="c" style="left:319px;top:649px;width:83px;height:33px;padding-left:4px"><span>2/28/2022</span></div>
<div class="c" style="left:403px;top:649px;width:158px;height:33px;padding-left:4px"><span>Alabama Power Co</span></div>
<div class="c" style="left:562px;top:649px;width:83px;height:33px;padding-left:4px"><span>Expense Only</span></div>
<div class="c" style="left:646px;top:649px;width:108px;height:33px;letter-spacing:-0.35px;padding-left:4px"><span></span></div>
<div class="c" style="left:755px;top:649px;width:83px;height:33px;padding-left:4px"><span>1</span></div>
<div class="c" style="left:839px;top:649px;width:193px;height:33px;padding-left:4px"><span></span></div>
<div class="c" style="left:1033px;top:649px;width:173px;height:33px;padding-left:4px"><span></span></div>
<div class="c" style="left:1207px;top:649px;width:48px;height:33px;padding-left:4px"><span></span></div>
<div class="c" style="left:1256px;top:649px;width:41px;height:33px;border-right:none;padding-left:4px"><span></span></div>
<div class="inp" style="left:843px;top:656px;width:190px;height:19px"></div>
<div class="dinp" style="left:1037px;top:654px;width:136px;height:22px"></div>
<svg class="abs" style="left:1179px;top:657px" width="16" height="15" viewBox="0 0 16 15"><defs><linearGradient id="cg" x1="0" y1="0" x2="0" y2="1"><stop offset="0" stop-color="#3d8ad8"/><stop offset="1" stop-color="#1c5ba8"/></linearGradient></defs><rect x="0" y="2.2" width="16" height="12.3" rx="0.6" fill="url(#cg)"/><rect x="1" y="2.8" width="14" height="2.6" fill="#9fd4f7"/><rect x="1.10" y="6.00" width="2.1" height="2.0" fill="#fff"/><rect x="1.10" y="8.75" width="2.1" height="2.0" fill="#fff"/><rect x="1.10" y="11.50" width="2.1" height="2.0" fill="#fff"/><rect x="3.95" y="6.00" width="2.1" height="2.0" fill="#fff"/><rect x="3.95" y="8.75" width="2.1" height="2.0" fill="#fff"/><rect x="3.95" y="11.50" width="2.1" height="2.0" fill="#fff"/><rect x="6.80" y="6.00" width="2.1" height="2.0" fill="#fff"/><rect x="6.80" y="8.75" width="2.1" height="2.0" fill="#fff"/><rect x="6.80" y="11.50" width="2.1" height="2.0" fill="#fff"/><rect x="9.65" y="6.00" width="2.1" height="2.0" fill="#fff"/><rect x="9.65" y="8.75" width="2.1" height="2.0" fill="#fff"/><rect x="9.65" y="11.50" width="2.1" height="2.0" fill="#fff"/><rect x="12.50" y="6.00" width="2.1" height="2.0" fill="#fff"/><rect x="12.50" y="8.75" width="2.1" height="2.0" fill="#fff"/><rect x="12.50" y="11.50" width="2.1" height="2.0" fill="#fff"/><rect x="2.2" y="0" width="2" height="4.6" rx="0.8" fill="#1650a0"/><rect x="2.6" y="0.3" width="1" height="2" fill="#6fb8ef"/><rect x="11.8" y="0" width="2" height="4.6" rx="0.8" fill="#1650a0"/><rect x="12.2" y="0.3" width="1" height="2" fill="#6fb8ef"/></svg>
<svg class="abs" style="left:1222px;top:660px" width="17" height="11" viewBox="0 0 17 11">
<path d="M0.8 5.5 C3.2 -0.9 13.8 -0.9 16.2 5.5 C13.8 11.9 3.2 11.9 0.8 5.5 Z" fill="none" stroke="#1010e0" stroke-width="1.15"/>
<circle cx="8.5" cy="5.5" r="3.6" fill="#1010e0"/><path d="M6.3 4.9 C6.5 3.7 7.3 3.0 8.4 3.0" fill="none" stroke="#fff" stroke-width="0.9"/></svg>
<svg class="abs" style="left:1268px;top:656px" width="17" height="17" viewBox="0 0 17 17">
<defs><linearGradient id="rg1268656" x1="0" y1="0" x2="0" y2="1"><stop offset="0" stop-color="#ff6a48"/><stop offset="0.5" stop-color="#f42a12"/><stop offset="1" stop-color="#dc0000"/></linearGradient></defs>
<g fill="none" stroke="url(#rg1268656)" stroke-linecap="round">
<path d="M2.6 2.4 C5 4.3 7.5 6.6 9.2 8.8 C11.3 11.2 12.8 13.3 14.6 15.6" stroke-width="2.6"/>
<path d="M14.9 2.3 C11.5 4.8 9.2 6.8 7.5 9.2 C5.6 11.5 4.4 13.2 3.2 14.6" stroke-width="3.0"/>
<circle cx="2.8" cy="2.6" r="1.1" stroke-width="1.4"/>
</g></svg>
<div class="c" style="left:12px;top:683px;width:83px;height:39px;letter-spacing:-0.8px;padding-left:4px"><span>134</span></div>
<div class="c" style="left:96px;top:683px;width:128px;height:39px;letter-spacing:-0.3px;padding-left:4px"><span>1/31/2022 9:26:35 AM</span></div>
<div class="c" style="left:225px;top:683px;width:93px;height:39px;padding-left:4px"><span>2/1/2022</span></div>
<div class="c" style="left:319px;top:683px;width:83px;height:39px;padding-left:4px"><span>2/28/2022</span></div>
<div class="c" style="left:403px;top:683px;width:158px;height:39px;padding-left:4px"><span>Chase Home Mortgage</span></div>
<div class="c" style="left:562px;top:683px;width:83px;height:39px;padding-left:4px"><span>Homeowner<br>Assistance</span></div>
<div class="c" style="left:646px;top:683px;width:108px;height:39px;letter-spacing:-0.35px;padding-left:4px"><span>210010</span></div>
<div class="c" style="left:755px;top:683px;width:83px;height:39px;padding-left:4px"><span>1</span></div>
<div class="c" style="left:839px;top:683px;width:193px;height:39px;padding-left:4px"><span></span></div>
<div class="c" style="left:1033px;top:683px;width:173px;height:39px;padding-left:4px"><span></span></div>
<div class="c" style="left:1207px;top:683px;width:48px;height:39px;padding-left:4px"><span></span></div>
<div class="c" style="left:1256px;top:683px;width:41px;height:39px;border-right:none;padding-left:4px"><span></span></div>
<div class="inp" style="left:843px;top:693px;width:190px;height:19px"></div>
<div class="dinp" style="left:1037px;top:691px;width:136px;height:22px"></div>
<svg class="abs" style="left:1179px;top:694px" width="16" height="15" viewBox="0 0 16 15"><defs><linearGradient id="cg" x1="0" y1="0" x2="0" y2="1"><stop offset="0" stop-color="#3d8ad8"/><stop offset="1" stop-color="#1c5ba8"/></linearGradient></defs><rect x="0" y="2.2" width="16" height="12.3" rx="0.6" fill="url(#cg)"/><rect x="1" y="2.8" width="14" height="2.6" fill="#9fd4f7"/><rect x="1.10" y="6.00" width="2.1" height="2.0" fill="#fff"/><rect x="1.10" y="8.75" width="2.1" height="2.0" fill="#fff"/><rect x="1.10" y="11.50" width="2.1" height="2.0" fill="#fff"/><rect x="3.95" y="6.00" width="2.1" height="2.0" fill="#fff"/><rect x="3.95" y="8.75" width="2.1" height="2.0" fill="#fff"/><rect x="3.95" y="11.50" width="2.1" height="2.0" fill="#fff"/><rect x="6.80" y="6.00" width="2.1" height="2.0" fill="#fff"/><rect x="6.80" y="8.75" width="2.1" height="2.0" fill="#fff"/><rect x="6.80" y="11.50" width="2.1" height="2.0" fill="#fff"/><rect x="9.65" y="6.00" width="2.1" height="2.0" fill="#fff"/><rect x="9.65" y="8.75" width="2.1" height="2.0" fill="#fff"/><rect x="9.65" y="11.50" width="2.1" height="2.0" fill="#fff"/><rect x="12.50" y="6.00" width="2.1" height="2.0" fill="#fff"/><rect x="12.50" y="8.75" width="2.1" height="2.0" fill="#fff"/><rect x="12.50" y="11.50" width="2.1" height="2.0" fill="#fff"/><rect x="2.2" y="0" width="2" height="4.6" rx="0.8" fill="#1650a0"/><rect x="2.6" y="0.3" width="1" height="2" fill="#6fb8ef"/><rect x="11.8" y="0" width="2" height="4.6" rx="0.8" fill="#1650a0"/><rect x="12.2" y="0.3" width="1" height="2" fill="#6fb8ef"/></svg>
<svg class="abs" style="left:1222px;top:697px" width="17" height="11" viewBox="0 0 17 11">
<path d="M0.8 5.5 C3.2 -0.9 13.8 -0.9 16.2 5.5 C13.8 11.9 3.2 11.9 0.8 5.5 Z" fill="none" stroke="#1010e0" stroke-width="1.15"/>
<circle cx="8.5" cy="5.5" r="3.6" fill="#1010e0"/><path d="M6.3 4.9 C6.5 3.7 7.3 3.0 8.4 3.0" fill="none" stroke="#fff" stroke-width="0.9"/></svg>
<svg class="abs" style="left:1268px;top:693px" width="17" height="17" viewBox="0 0 17 17">
<defs><linearGradient id="rg1268693" x1="0" y1="0" x2="0" y2="1"><stop offset="0" stop-color="#ff6a48"/><stop offset="0.5" stop-color="#f42a12"/><stop offset="1" stop-color="#dc0000"/></linearGradient></defs>
<g fill="none" stroke="url(#rg1268693)" stroke-linecap="round">
<path d="M2.6 2.4 C5 4.3 7.5 6.6 9.2 8.8 C11.3 11.2 12.8 13.3 14.6 15.6" stroke-width="2.6"/>
<path d="M14.9 2.3 C11.5 4.8 9.2 6.8 7.5 9.2 C5.6 11.5 4.4 13.2 3.2 14.6" stroke-width="3.0"/>
<circle cx="2.8" cy="2.6" r="1.1" stroke-width="1.4"/>
</g></svg>
<div class="abs" style="left:7px;top:720px;width:1291px;height:24px;background:#fff;border-top:1px solid #344b64;border-bottom:1px solid #344b64"></div>
<div class="abs" style="left:12px;top:723px;font:13.5px/18px 'Liberation Sans',sans-serif;color:#3b3e4b">/AdminUtilities/DisbursementsExportHistoryModal.aspx?Panel=Utilities</div>
<div class="frame" style="left:238px;top:772px;width:1305px;height:470px">
<div class="tbar"><div class="hl"></div><div class="hl2"></div></div>
</div>
<svg class="abs" style="left:246px;top:779px" width="16" height="16" viewBox="0 0 16 16">
<rect x="0.5" y="5" width="15" height="10.5" fill="#fff" stroke="#16191a" stroke-width="1"/>
<rect x="1" y="13.5" width="14" height="1.5" fill="#eaf8e0"/>
<rect x="0" y="0" width="16" height="5.6" rx="0.8" fill="#23761f"/>
<rect x="1" y="1" width="14" height="3.4" fill="#58bf3c"/>
<rect x="1" y="1" width="1.2" height="3.4" fill="#c9f0b2"/>
<ellipse cx="11.9" cy="2.6" rx="1.1" ry="0.65" fill="#0f4f19"/><circle cx="14" cy="2.6" r="0.6" fill="#0f4f19"/>
<rect x="3" y="6.9" width="10" height="1.1" rx="0.5" fill="#0c6220"/>
<rect x="3" y="8.9" width="10" height="1.1" rx="0.5" fill="#0c6220"/>
<rect x="3" y="11" width="5" height="1.1" rx="0.5" fill="#0c6220"/>
</svg>
<div class="ttl" style="left:268px;top:781px">Disbursements</div>
<div class="xbtn" style="left:1504px;top:780px"><svg class="abs" style="left:8px;top:3px" width="12" height="11" viewBox="0 0 12 11">
<path d="M2.2 2.2 L9.8 8.8 M9.8 2.2 L2.2 8.8" stroke="#2a3a4c" stroke-width="3.8" stroke-linecap="butt"/>
<path d="M2.2 2.2 L9.8 8.8 M9.8 2.2 L2.2 8.8" stroke="#fff" stroke-width="2.4" stroke-linecap="butt"/></svg></div>
<div class="content" style="left:244px;top:801px;width:1293px;height:440px"></div>
<div class="btn g" style="left:251px;top:807px;width:78px"></div>
<svg class="abs" style="left:259px;top:815px" width="12" height="12" viewBox="0 0 12 12">
<circle cx="6" cy="6" r="4.8" fill="none" stroke="#7d8496" stroke-width="1.7"/><path d="M2.8 9.2 L9.2 2.8" stroke="#7d8496" stroke-width="1.7"/></svg>
<div class="abs" style="left:278px;top:807px;font:13.5px/29px 'Liberation Sans',sans-serif;color:#8a8d99">Cancel</div>
<div class="band" style="left:246px;top:847px;width:1290px;height:34px"></div>
<div class="abs" style="left:264px;top:901px;font:15px/18px 'Liberation Sans',sans-serif;color:#3b3e4b">Export Id</div>
<div class="abs" style="left:561px;top:901px;font:bold 14px/18px 'Liberation Sans',sans-serif;color:#3b3e4b">153</div>
<div class="abs" style="left:904px;top:901px;font:15px/18px 'Liberation Sans',sans-serif;color:#3b3e4b">Export DateTime</div>
<div class="abs" style="left:1201px;top:901px;font:bold 14px/18px 'Liberation Sans',sans-serif;color:#3b3e4b">2/1/2022 11:52:59 AM</div>
<div class="sec" style="left:249px;top:944px">Disbursements</div>
<div class="rule" style="left:249px;top:964px;width:1282px"></div>
<div class="abs" style="left:250px;top:984px;width:1281px;height:236px;border:1px solid #dcdcdc;border-radius:3px;background:#fff"></div>
<div class="h2" style="left:251px;top:985px;width:161px;height:62px;padding-left:8px"><span>Batch Number</span></div>
<div class="h2" style="left:412px;top:985px;width:160px;height:62px;padding-left:7px"><span>Homeowner Name</span></div>
<div class="h2" style="left:572px;top:985px;width:159px;height:62px;"></div>
<div class="abs" style="left:579px;top:991px;font:bold 12px/18px 'Liberation Sans',sans-serif;color:#36373d;letter-spacing:0.15px;white-space:nowrap">Application Number</div>
<div class="h2" style="left:731px;top:985px;width:160px;height:62px;padding-left:7px"><span>Payee Name</span></div>
<div class="h2" style="left:891px;top:985px;width:160px;height:62px;padding-left:7px"><span>Account Number</span></div>
<div class="h2" style="left:1051px;top:985px;width:160px;height:62px;padding-left:7px"><span>Total Payment Amount</span></div>
<div class="h2" style="left:1211px;top:985px;width:160px;height:62px;padding-left:7px"><span>Disbursement Type</span></div>
<div class="h2" style="left:1371px;top:985px;width:159px;height:62px;border-right:none;"></div>
<div class="abs" style="left:1378px;top:991px;font:bold 12px/18px 'Liberation Sans',sans-serif;color:#36373d;letter-spacing:0.15px;white-space:nowrap">Disbursement Due Date</div>
<div class="abs" style="left:251px;top:1047px;width:1279px;height:2px;background:#dadada"></div>
<div class="abs" style="left:251px;top:985px;width:1px;height:62px;background:#dedede"></div>
<div class="c2" style="left:251px;top:1049px;width:161px;height:57px;padding-left:8px;letter-spacing:-0.45px;"><span>20220136</span></div>
<div class="c2" style="left:412px;top:1049px;width:160px;height:57px;padding-left:6px;"><span>Leonard Megliola</span></div>
<div class="c2" style="left:572px;top:1049px;width:159px;height:57px;padding-left:6px;letter-spacing:-0.45px;"><span>518</span></div>
<div class="c2" style="left:731px;top:1049px;width:160px;height:57px;padding-left:6px;"><span>Community<br>Management</span></div>
<div class="c2" style="left:891px;top:1049px;width:160px;height:57px;padding-left:6px;letter-spacing:-0.45px;"><span>458596999</span></div>
<div class="c2" style="left:1051px;top:1049px;width:160px;height:57px;padding-left:6px;letter-spacing:-0.3px;"><span>$200.00</span></div>
<div class="c2" style="left:1211px;top:1049px;width:160px;height:57px;padding-left:6px;"><span>Automatic Regular</span></div>
<div class="c2" style="left:1371px;top:1049px;width:159px;height:57px;padding-left:6px;"><span>2/1/2022</span></div>
<div class="c2" style="left:251px;top:1106px;width:161px;height:56px;padding-left:8px;letter-spacing:-0.45px;padding-bottom:2px;"><span>20220137</span></div>
<div class="c2" style="left:412px;top:1106px;width:160px;height:56px;padding-left:6px;padding-bottom:2px;"><span>Andie Anderson</span></div>
<div class="c2" style="left:572px;top:1106px;width:159px;height:56px;padding-left:6px;letter-spacing:-0.45px;padding-bottom:2px;"><span>390</span></div>
<div class="c2" style="left:731px;top:1106px;width:160px;height:56px;padding-left:6px;padding-bottom:2px;"><span>Community<br>Management</span></div>
<div class="c2" style="left:891px;top:1106px;width:160px;height:56px;padding-left:6px;letter-spacing:-0.45px;padding-bottom:2px;"><span>5457721011</span></div>
<div class="c2" style="left:1051px;top:1106px;width:160px;height:56px;padding-left:6px;letter-spacing:-0.3px;padding-bottom:2px;"><span>$68.78</span></div>
<div class="c2" style="left:1211px;top:1106px;width:160px;height:56px;padding-left:6px;padding-bottom:2px;"><span>Automatic Regular</span></div>
<div class="c2" style="left:1371px;top:1106px;width:159px;height:56px;padding-left:6px;padding-bottom:2px;"><span>2/15/2022</span></div>
<div class="c2" style="left:251px;top:1162px;width:161px;height:56px;padding-left:8px;letter-spacing:-0.45px;padding-bottom:2px;"><span>20220138</span></div>
<div class="c2" style="left:412px;top:1162px;width:160px;height:56px;padding-left:6px;padding-bottom:2px;"><span>Sam Rutherford</span></div>
<div class="c2" style="left:572px;top:1162px;width:159px;height:56px;padding-left:6px;letter-spacing:-0.45px;padding-bottom:2px;"><span>324</span></div>
<div class="c2" style="left:731px;top:1162px;width:160px;height:56px;padding-left:6px;padding-bottom:2px;"><span>Community<br>Management</span></div>
<div class="c2" style="left:891px;top:1162px;width:160px;height:56px;padding-left:6px;letter-spacing:-0.45px;padding-bottom:2px;"><span>4411-1101-4112445</span></div>
<div class="c2" style="left:1051px;top:1162px;width:160px;height:56px;padding-left:6px;letter-spacing:-0.3px;padding-bottom:2px;"><span>$82.00</span></div>
<div class="c2" style="left:1211px;top:1162px;width:160px;height:56px;padding-left:6px;padding-bottom:2px;"><span>Automatic Regular</span></div>
<div class="c2" style="left:1371px;top:1162px;width:159px;height:56px;padding-left:6px;padding-bottom:2px;"><span>2/16/2022</span></div>
<svg class="abs" style="left:592px;top:1024px" width="8" height="7" viewBox="0 0 8 7"><path d="M0 6.5H8L4 0Z" fill="#222"/></svg>
<svg class="abs" style="left:827px;top:1014px" width="8" height="7" viewBox="0 0 8 7"><path d="M0 6.5H8L4 0Z" fill="#222"/></svg>
<svg class="abs" style="left:1391px;top:1024px" width="8" height="7" viewBox="0 0 8 7"><path d="M0 6.5H8L4 0Z" fill="#222"/></svg>
<div class="abs" style="left:644px;top:197px;width:109px;height:525px;border:3px solid #ff7b47"></div>
<div class="abs" style="left:1244px;top:305px;width:5px;height:478px;background:#ff7b47;border-radius:2px 2px 0 0"></div>
<svg class="abs" style="left:1238px;top:778px" width="17" height="18" viewBox="0 0 17 18"><path d="M0 0H17L8.5 17Z" fill="#ff7b47"/></svg>
</div></body></html>
